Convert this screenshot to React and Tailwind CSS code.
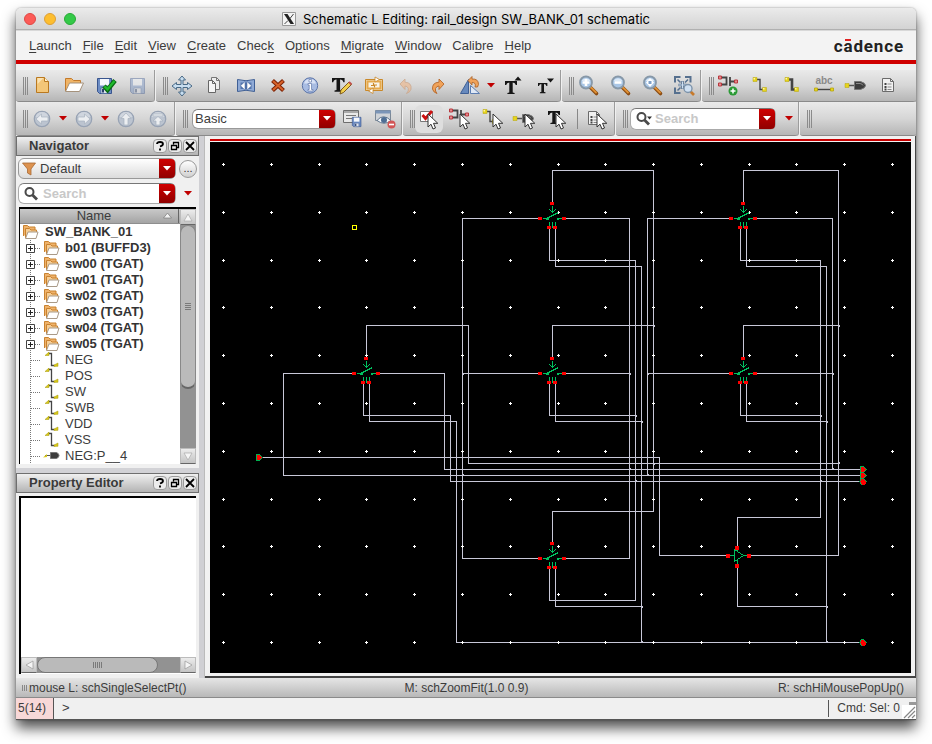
import React from "react";

const FONT = "font-['Liberation_Sans',Arial,sans-serif]";

/* ---------- shared drawings ---------- */

function Icon({ children, w = 30, h = 26 }) {
  return (
    <svg width={w} height={h} viewBox={`0 0 ${w} ${h}`} fill="none" aria-hidden="true" className="block shrink-0">
      {children}
    </svg>
  );
}

const Triangle = () => (
  <svg width="8" height="5" viewBox="0 0 8 5" aria-hidden="true" className="block shrink-0">
    <path d="M0 0h8L4 4.500z" fill="#c00000" />
  </svg>
);

const Floppy = ({ x, y, s = 1, faded }) => (
  <g transform={`translate(${x} ${y}) scale(${s})`} opacity={faded ? 0.4 : 1}>
    <path d="M.5.5h14v15H2.500l-2-2z" fill="#6d8dc4" stroke="#39558e" />
    <path d="M3 1h9v6.500H3z" fill="#f4f7fc" />
    <path d="M4 10h7v5.500H4z" fill="#dfe4ee" stroke="#39558e" strokeWidth=".6" />
    <path d="M5 11h2v3.500H5z" fill="#2b416e" />
  </g>
);

const Cursor = ({ x, y }) => (
  <path
    transform={`translate(${x} ${y})`}
    d="M0 0v13l3-2.800 2 4.800 2.500-1-2-4.700H9.800z"
    fill="#fff"
    stroke="#333"
    strokeWidth="1"
  />
);

const Lens = ({ children }) => (
  <>
    <path d="M17 14l6.500 6.500" stroke="#8a4b12" strokeWidth="3.600" strokeLinecap="round" />
    <path d="M18 14.500l5 5" stroke="#e09033" strokeWidth="1.800" strokeLinecap="round" />
    <circle cx="13" cy="9.500" r="6" fill="#a9c6e6" stroke="#8798a8" strokeWidth="1.800" />
    <path d="M8.500 8a5 5 0 0 1 9 0" fill="#dbe9f7" />
    {children}
  </>
);

const NavCircle = ({ children }) => (
  <>
    <circle cx="15" cy="13" r="7.700" fill="#bcc4d0" stroke="#98a3b4" strokeWidth="1.300" />
    <path d="M8.500 11a6.700 6.700 0 0 1 13 0" fill="#cfd5de" />
    <g fill="#eceef1" stroke="#a8b1be" strokeWidth=".7">{children}</g>
  </>
);

const Transistor = ({ x, y }) => (
  <g transform={`translate(${x} ${y})`}>
    <path d="M3 2.500h5M3 9.500h5M8.500 1.500v9M12 2v9M12 6.500h5" stroke="#444" strokeWidth="1.800" />
    <path d="M.5 1h3v3h-3zM.5 8h3v3h-3zM16.500 5h3v3h-3z" fill="#e58b8e" stroke="#b8383e" />
  </g>
);

const WireGlyph = ({ x, y, wide }) => (
  <g transform={`translate(${x} ${y})`}>
    <path d="M3 2.500h4v10h4" stroke="#444" strokeWidth={wide ? 2.600 : 1.400} />
    <path d="M0 .5h4v4H0zM9.500 10.500h4v4h-4z" fill="#e6d41e" stroke="#b5a50a" strokeWidth=".5" />
    <path d="M.5 1h1.500v1.500H.5zM10 11h1.500v1.500H10z" fill="#fff6a8" />
  </g>
);

const PinGlyph = ({ x, y }) => (
  <g transform={`translate(${x} ${y})`}>
    <path d="M3 4.500h6" stroke="#555" strokeWidth="1.500" />
    <path d="M9.500.5h6q5 1.500 5 4t-5 4h-6z" fill="#3d3d3d" stroke="#777" />
    <path d="M11 2.500h4q3 .6 3 2" stroke="#8a8a8a" />
    <path d="M0 2.500h4v4H0z" fill="#e6d41e" stroke="#b5a50a" strokeWidth=".5" />
  </g>
);

const Sheet = ({ x, y }) => (
  <g transform={`translate(${x} ${y})`}>
    <path d="M.5.5h8l3 3v10H.5z" fill="#f1f1f1" stroke="#6b6b6b" />
    <path d="M8.500.5v3h3" stroke="#6b6b6b" />
    <path d="M2.500 6h2M2.500 9h2M2.500 11.500h2" stroke="#444" strokeWidth="1.800" />
    <path d="M5.500 6h4M5.500 9h4M5.500 11.500h4" stroke="#888" />
  </g>
);

const BoldT = ({ x, y, s = 1 }) => (
  <path
    transform={`translate(${x} ${y}) scale(${s})`}
    d="M0 0h12v4h-1.200Q10.300 1.400 7.700 1.400V11.500L9.600 12v1H2.400v-1l1.900-.5V1.400Q1.700 1.400 1.200 4H0z"
    fill="#151515"
  />
);

const I = {
  newFile: (
    <Icon>
      <path d="M9.500 4.500h8l4 4v11h-12z" fill="#f3c678" stroke="#b97820" />
      <path d="M10.500 11l6-6h-6z" fill="#fbe3b4" />
      <path d="M17.500 4.500v4h4" fill="#fff1cf" stroke="#b97820" />
    </Icon>
  ),
  open: (
    <Icon>
      <path d="M6.500 18V5.500h6l2 2h7v4" fill="#f0b466" stroke="#c47a2a" />
      <path d="M6.500 18.500l4-8.500h14l-4 8.500z" fill="#fff" stroke="#a5927c" />
    </Icon>
  ),
  saveCheck: (
    <Icon>
      <Floppy x={6} y={5} />
      <path d="M13 13l3.500 4L24 7.500" stroke="#0a6a12" strokeWidth="4.500" />
      <path d="M13.500 13.300l3 3L23.500 8" stroke="#1fba2c" strokeWidth="2.400" />
    </Icon>
  ),
  save: (<Icon><Floppy x={7} y={5} faded /></Icon>),
  move: (
    <Icon>
      <path d="M15 3l3.500 4H16v4.500h4.500V9.500L25 13l-4.500 3.500v-2H16V19h2.500L15 23l-3.500-4H14v-4.500H9.500v2L5 13l4.500-3.500v2H14V7h-2.500z" fill="#c8def0" stroke="#4a6a86" />
    </Icon>
  ),
  copy: (
    <Icon>
      <path d="M12.500 4.500h5l3 3v9h-8z" fill="#eee" stroke="#777" />
      <path d="M17.500 4.500v3h3" stroke="#777" />
      <path d="M9.500 7.500h4l3 3v9h-7z" fill="#f5f5f5" stroke="#666" />
      <path d="M13.500 7.500v3h3" stroke="#666" />
    </Icon>
  ),
  stretch: (
    <Icon>
      <path d="M6.500 6.500q8.500 2.500 17 0v12q-8.500-2.500-17 0z" fill="#8faad6" stroke="#3f5f95" />
      <path d="M9.500 9.500h11v6.500h-11z" fill="#5577af" />
      <path d="M14 8.500l-4.500 4.300 4.500 4.300zM16 8.500l4.500 4.300-4.500 4.300z" fill="#fff" stroke="#3f5f95" strokeWidth=".5" />
    </Icon>
  ),
  del: (
    <Icon>
      <path d="M9.500 7.500l11 10M20.500 7.500l-11 10" stroke="#7e2306" strokeWidth="4.200" />
      <path d="M10 8l10 9M20 8l-10 9" stroke="#d9632a" strokeWidth="2" />
    </Icon>
  ),
  info: (
    <Icon>
      <circle cx="15" cy="12.500" r="7.700" fill="#a8bce2" stroke="#5b74a8" />
      <path d="M9 10.500a6.300 6.300 0 0 1 12 0" fill="#d8e2f5" />
      <path d="M14 6.500h2.500V9H14zM13 10.500h3.500v6H18V18h-5v-1.500h1.200V12H13z" fill="#fff" stroke="#50699f" strokeWidth=".6" />
    </Icon>
  ),
  editText: (
    <Icon>
      <BoldT x={5} y={5} s={1.050} />
      <path d="M13 21l1-4 8-8 2.500 2.500-8 8z" fill="#f2cf4d" stroke="#7d5a1c" />
      <path d="M22 9l2.500 2.500" stroke="#c0504d" strokeWidth="2" />
    </Icon>
  ),
  swap: (
    <Icon>
      <path d="M6.500 6.500h17v11h-17z" fill="#eedcb8" stroke="#c98829" />
      <path d="M8.500 8.500h13v7h-13z" fill="#f8f4ea" stroke="#e6a94c" strokeWidth="2" />
      <path d="M16 4v5l4.500-2.500zM14 15v5.500L9.500 18z" fill="#fff" stroke="#c98829" strokeWidth=".8" />
      <path d="M12 12.500h2.500V10M18 12h-2.500v2.500" stroke="#c98829" strokeWidth="1.200" />
    </Icon>
  ),
  undo: (
    <Icon>
      <path d="M9 11l5-5v3.200q7 .3 6 7-1 3.300-4.500 4.300 2.500-2.500 1.800-5Q16.500 13 14 13v3.500z" fill="#e9bd9a" stroke="#c9a080" strokeWidth=".8" opacity=".8" />
    </Icon>
  ),
  redo: (
    <Icon>
      <path d="M21 11l-5-5v3.200q-7 .3-6.500 7 1 3.300 4.500 4.300-2.200-2.500-1.500-5 1-2.500 3.500-2.500v3.500z" fill="#f0a259" stroke="#b5682a" strokeWidth=".9" />
    </Icon>
  ),
  rotate: (
    <Icon>
      <path d="M5.500 20.500h8v-14z" fill="#6789bd" stroke="#3f5f95" />
      <path d="M15.500 20.500v-8l9 8z" fill="#dfe8f5" stroke="#5c7db1" />
      <path d="M13 7.500l4-4V6q6.500-.5 6.500 5.500l-1 2.500h-2.500q1.500-4.500-3-4.500v2.500z" fill="#f0a259" stroke="#a85e25" strokeWidth=".8" />
    </Icon>
  ),
  textUp: (
    <Icon>
      <BoldT x={8} y={8} />
      <path d="M17.500 7.500l3.500-4 3.500 4z" fill="#151515" />
    </Icon>
  ),
  textDown: (
    <Icon>
      <BoldT x={9} y={10} s={0.780} />
      <path d="M18 5.500h7l-3.500 4z" fill="#151515" />
    </Icon>
  ),
  zoomIn: (<Icon><Lens><path d="M9.500 9.500h7M13 6v7" stroke="#fff" strokeWidth="2.600" /></Lens></Icon>),
  zoomOut: (<Icon><Lens><path d="M9.500 9.500h7" stroke="#fff" strokeWidth="2.600" /></Lens></Icon>),
  zoomFit: (<Icon><Lens><path d="M13 5l4 4.500-4 4.500-4-4.500z" fill="#fff" /><path d="M11.500 8h3v3h-3z" fill="#7fa0c8" /></Lens></Icon>),
  zoomSel: (
    <Icon>
      <path d="M6 9.500V4h5.500M16 4h5.500v5.500M6 14.500V20h5.500" stroke="#56708f" strokeWidth="2" />
      <path d="M8.500 6.500l3 3M19 6.500l-3 3M8.500 17.500l3-3" stroke="#56708f" strokeWidth="1.500" />
      <path d="M13.500 8v8M9.500 12h8" stroke="#56708f" strokeWidth="2.600" />
      <path d="M13.500 8.500v7M10 12h7" stroke="#cfe0f2" />
      <path d="M21 18l4 4" stroke="#c77a2b" strokeWidth="2.600" />
      <circle cx="19" cy="15.500" r="4" fill="#cfe0f2" stroke="#7d93aa" strokeWidth="1.400" />
    </Icon>
  ),
  addInstance: (
    <Icon>
      <Transistor x={5} y={2} />
      <circle cx="20" cy="18" r="4.500" fill="#2b9a35" />
      <path d="M17.500 18h5M20 15.500v5" stroke="#fff" strokeWidth="1.500" />
    </Icon>
  ),
  wire: (<Icon><WireGlyph x={8} y={4} /></Icon>),
  wideWire: (<Icon><WireGlyph x={8} y={4} wide /></Icon>),
  label: (
    <Icon>
      <text x="15" y="11" textAnchor="middle" fontSize="10" fontWeight="700" fill="#8a8a8a" fontFamily="Liberation Sans">abc</text>
      <path d="M8 16.500h14" stroke="#444" strokeWidth="1.400" />
      <path d="M5.500 15h3v3h-3zM21.500 15h3v3h-3z" fill="#e6d41e" stroke="#b5a50a" strokeWidth=".8" />
    </Icon>
  ),
  pin: (<Icon><PinGlyph x={4} y={8} /></Icon>),
  props: (<Icon><Sheet x={9} y={5} /></Icon>),
  back: (<Icon><NavCircle><path d="M9 13l5.500-5v3H21v4h-6.500v3z" /></NavCircle></Icon>),
  forward: (<Icon><NavCircle><path d="M21 13l-5.500-5v3H9v4h6.500v3z" /></NavCircle></Icon>),
  up: (<Icon><NavCircle><path d="M15 7l5 5.500h-3V19h-4v-6.500h-3z" /></NavCircle></Icon>),
  top: (<Icon><NavCircle><path d="M10 8h10v2H10zM15 10.500l5 4.500h-3v4h-4v-4h-3z" /></NavCircle></Icon>),
  saveView: (
    <Icon>
      <path d="M5.500 4.500h15v12h-15z" fill="#e9e9e9" stroke="#6d6d6d" />
      <path d="M6 5h14v2H6z" fill="#a9a9a9" />
      <path d="M8 9.500h10M8 12.500h6" stroke="#777" strokeWidth="1.200" />
      <Floppy x={14} y={11} s={0.620} />
    </Icon>
  ),
  hideView: (
    <Icon>
      <path d="M5.500 4.500h15v10h-15z" fill="#cfd3d8" stroke="#7b8896" />
      <path d="M5.500 4.500h15v3h-15z" fill="#7b95b8" />
      <path d="M7 14.500q6-7.500 14 0-7 5.500-14 0z" fill="#f4f7fa" stroke="#60748c" />
      <circle cx="14" cy="14" r="3" fill="#4e6e94" />
      <circle cx="21.500" cy="18.500" r="4" fill="#d25656" />
      <path d="M19 18.500h5" stroke="#fff" strokeWidth="1.600" />
    </Icon>
  ),
  selAll: (
    <Icon>
      <path d="M6.500 5.500h12v10h-12z" fill="#fff" stroke="#777" />
      <path d="M8.500 9l3 3.500 6.500-7.500" stroke="#cc1111" strokeWidth="2.800" />
      <Cursor x={14} y={8} />
    </Icon>
  ),
  selInst: (<Icon><Transistor x={3} y={2} /><Cursor x={14} y={8} /></Icon>),
  selWire: (<Icon><WireGlyph x={5} y={3} /><Cursor x={15} y={8} /></Icon>),
  selPin: (<Icon><PinGlyph x={3} y={8} /><Cursor x={15} y={8} /></Icon>),
  selText: (<Icon><BoldT x={6} y={5} /><Cursor x={14} y={8} /></Icon>),
  selFilter: (<Icon><Sheet x={5} y={5} /><Cursor x={14} y={8} /></Icon>),
};

const SearchGlyph = ({ small }) => (
  <svg width="18" height="16" viewBox="0 0 18 16" fill="none" aria-hidden="true" className="block shrink-0">
    <circle cx="6.500" cy="6" r="4" stroke="#4a4a4a" strokeWidth="2" />
    <path d="M9.500 9l4.500 4.500" stroke="#4a4a4a" strokeWidth="2.800" />
    {small && <path d="M12 5.500h5l-2.500 3z" fill="#333" />}
  </svg>
);

/* ---------- toolbar parts ---------- */

function Group({ children, grow, label }) {
  return (
    <div
      role="toolbar"
      aria-label={label}
      className={
        "flex items-center rounded-b-[3px] border-b border-[#8a8a8a] bg-linear-to-b from-[#eaeaea] via-[#d6d6d6] to-[#b6b6b6] shadow-[1px_0_0_#9c9c9c] " +
        (grow ? "flex-1" : "")
      }
    >
      <span className="ml-[7px] -mr-0.5 flex h-[18px] w-[5px] shrink-0 justify-between">
        <span className="w-px bg-[#8b8b8b]" />
        <span className="w-px bg-[#8b8b8b]" />
        <span className="w-px bg-[#8b8b8b]" />
      </span>
      {children}
    </div>
  );
}

const Tool = ({ icon, name, active }) => (
  <button
    type="button"
    aria-label={name}
    className={
      "flex h-7 shrink-0 items-center justify-center " +
      (active ? "mx-0.5 w-7 rounded-md bg-[#dedede]" : "w-8")
    }
  >
    {I[icon]}
  </button>
);

const Drop = ({ name }) => (
  <button type="button" aria-label={name} className="flex h-5 w-2.5 shrink-0 items-center justify-center">
    <Triangle />
  </button>
);

const RedArrow = () => (
  <span className="pointer-events-none flex w-4 shrink-0 items-center justify-center self-stretch rounded-r bg-linear-to-b from-[#d00000] to-[#900000]">
    <svg width="8" height="5" viewBox="0 0 8 5" aria-hidden="true">
      <path d="M0 0h8L4 4.500z" fill="#fff" />
    </svg>
  </span>
);

const MENUS = [
  ["", "L", "aunch"], ["", "F", "ile"], ["", "E", "dit"], ["", "V", "iew"], ["", "C", "reate"], ["Chec", "k", ""],
  ["O", "p", "tions"], ["", "M", "igrate"], ["", "W", "indow"], ["Cali", "b", "re"], ["", "H", "elp"],
];

/* ---------- side panels ---------- */

const PanelHeader = ({ title }) => (
  <div className="flex h-5 items-center border border-[#6f6f6f] bg-linear-to-b from-[#f0f0f0] to-[#b4b4b4] pl-3">
    <h2 className="flex-1 text-[13px] leading-4 font-bold text-[#3a3a3a]">{title}</h2>
    {["Help", "Float", "Close"].map((n) => (
      <button key={n} type="button" aria-label={n} className="mr-px flex h-3.5 w-3.5 items-center justify-center rounded border border-[#9a9a9a] bg-[#ececec]">
        <svg width="10" height="10" viewBox="0 0 10 10" fill="none" stroke="#000" aria-hidden="true">
          {n === "Help" && <path d="M2 3q0-2 3-2t3 2q0 1.500-3 2.500M5 7.500v2" strokeWidth="1.800" />}
          {n === "Float" && <path d="M3.500 3.500v-2h5v5h-2M1.500 4.500h5v4h-5zM3.500 1.500h5M1.500 4.500h5" strokeWidth="1.300" />}
          {n === "Close" && <path d="M1 1l8 8M9 1L1 9" strokeWidth="1.800" />}
        </svg>
      </button>
    ))}
  </div>
);

const Folder = () => (
  <svg width="17" height="16" viewBox="0 0 17 16" fill="none" aria-hidden="true" className="block shrink-0">
    <path d="M1.500 12V1.500h4l1.500 1.500h6v3" fill="#efb26a" stroke="#c9822f" />
    <path d="M3.500 14V4.500h4L9 6h5.500v3" fill="#f6cd94" stroke="#c9822f" />
    <path d="M3.500 14.500l2.500-6.500h10l-2 6.500z" fill="#fff" stroke="#a99a88" />
  </svg>
);

const NetIcon = () => (
  <svg width="17" height="16" viewBox="0 0 17 16" fill="none" aria-hidden="true" className="block shrink-0">
    <path d="M5 1.500h3.500v12h3" stroke="#444" strokeWidth="1.300" />
    <path d="M2 3.500L6 0v3.500zM11 14.500l4-.2V11l-4 2z" fill="#d8c81a" stroke="#a69808" strokeWidth=".5" />
  </svg>
);

const PinIcon = () => (
  <svg width="17" height="16" viewBox="0 0 17 16" fill="none" aria-hidden="true" className="block shrink-0">
    <path d="M2 7.500h6" stroke="#555" />
    <path d="M0 9.500L4 6v3z" fill="#d8c81a" />
    <path d="M7.500 4.500h6q2.500 1 2.500 3t-2.500 3h-6z" fill="#3d3d3d" stroke="#777" />
  </svg>
);

const TREE = [
  ["b01 (BUFFD3)", "folder"], ["sw00 (TGAT)", "folder"], ["sw01 (TGAT)", "folder"], ["sw02 (TGAT)", "folder"],
  ["sw03 (TGAT)", "folder"], ["sw04 (TGAT)", "folder"], ["sw05 (TGAT)", "folder"],
  ["NEG", "net"], ["POS", "net"], ["SW", "net"], ["SWB", "net"], ["VDD", "net"], ["VSS", "net"], ["NEG:P__4", "pin"],
];

const Branch = ({ folder }) => (
  <svg width="23" height="16" viewBox="0 0 23 16" fill="none" aria-hidden="true" className="block shrink-0">
    <path d="M10.500 0v16M11 8.500h9" stroke="#777" strokeDasharray="1 1" />
    {folder && (
      <>
        <path d="M6.500 4.500h8v8h-8z" fill="#fff" stroke="#444" />
        <path d="M8 8.500h5M10.500 6v5" stroke="#222" />
      </>
    )}
  </svg>
);

const scrollBtn =
  "flex h-4 w-4 shrink-0 items-center justify-center border border-[#bcbcbc] border-b-[#666] bg-linear-to-b from-[#ececec] to-[#c4c4c4]";

function Sidebar() {
  return (
    <aside className="flex w-[183px] shrink-0 flex-col bg-[#f0f0f0]">
      <section aria-label="Navigator" className="flex flex-1 flex-col pb-1">
        <PanelHeader title="Navigator" />
        <div className="flex items-center gap-[3px] pt-0.5 pl-0.5">
          <label className="flex h-[21px] w-[158px] items-center rounded-md border border-[#999] bg-linear-to-b from-white to-[#dcdcdc]">
            <svg width="14" height="14" viewBox="0 0 14 14" aria-hidden="true" className="ml-[3px] shrink-0">
              <path d="M.5 1h13L9 7v6l-3.500-2V7z" fill="#dd9350" stroke="#a86a35" strokeWidth=".8" />
            </svg>
            <select aria-label="View filter" className="min-w-0 flex-1 appearance-none bg-transparent pl-1 text-[13px] leading-4 text-[#3c3c3c]">
              <option>Default</option>
            </select>
            <RedArrow />
          </label>
          <button type="button" aria-label="More" className="flex h-[18px] w-[18px] items-end justify-center rounded-full border border-[#999] bg-linear-to-b from-white to-[#d0d0d0] pb-1 text-[11px] leading-[10px] text-[#333]">
            ...
          </button>
        </div>
        <div className="flex items-center gap-1 pt-1 pl-0.5">
          <label className="flex h-[21px] w-[158px] items-center rounded-md border border-[#aaa] border-t-[#777] bg-white pl-1">
            <SearchGlyph />
            <input type="text" aria-label="Search navigator" placeholder="Search" className="min-w-0 flex-1 bg-transparent pl-0.5 text-[13px] leading-4 font-bold placeholder:text-[#c8c8c8]" />
            <RedArrow />
          </label>
          <span className="flex w-4 justify-center"><Drop name="Search options" /></span>
        </div>
        <div className="mx-[3px] mt-[3px] flex flex-1 border-t-2 border-l border-black bg-white">
          <div className="min-w-0 flex-1">
            <div className="flex h-[15px] items-center border-b border-[#8e8e8e] bg-linear-to-b from-[#c9c9c9] to-[#a4a4a4] text-[13px] leading-[14px] text-[#3c3c3c]">
              <span className="flex-1 pl-2 text-center">Name</span>
              <svg width="20" height="14" viewBox="0 0 20 14" aria-hidden="true">
                <path d="M3.500 9l4-5 4 5z" fill="#f3f3f3" stroke="#777" strokeWidth=".7" />
                <path d="M18.500 0v14" stroke="#666" />
              </svg>
            </div>
            <div className="text-[13px] leading-4 text-[#3c3c3c]">
              <div className="flex items-center gap-1.5 pl-0.5 font-bold text-[#333]">
                <Folder />SW_BANK_01
              </div>
              <ul>
                {TREE.map(([name, kind]) => (
                  <li key={name} className={"flex h-4 items-center " + (kind === "folder" ? "font-bold text-[#333]" : "")}>
                    <Branch folder={kind === "folder"} />
                    {kind === "folder" ? <Folder /> : kind === "net" ? <NetIcon /> : <PinIcon />}
                    <span className="pl-[5px] whitespace-nowrap">{name}</span>
                  </li>
                ))}
              </ul>
            </div>
          </div>
          <div className="flex w-4 flex-col bg-[#929292]">
            <button type="button" aria-label="Scroll up" className={scrollBtn}>
              <svg width="10" height="9" viewBox="0 0 10 9" aria-hidden="true"><path d="M1 8l4-7 4 7z" fill="#f5f5f5" stroke="#aaa" strokeWidth=".7" /></svg>
            </button>
            <div className="flex h-[164px] flex-col items-center justify-center gap-px rounded-lg border border-[#888] border-b-2 border-b-[#666] bg-[#bababa]">
              {[0, 1, 2, 3].map((i) => <span key={i} className="h-px w-[6px] bg-[#7a7a7a]" />)}
            </div>
            <span className="flex-1" />
            <button type="button" aria-label="Scroll down" className={scrollBtn}>
              <svg width="10" height="9" viewBox="0 0 10 9" aria-hidden="true"><path d="M1 1h8L5 8z" fill="#f5f5f5" stroke="#aaa" strokeWidth=".7" /></svg>
            </button>
          </div>
        </div>
      </section>
      <div className="h-[5px] bg-[#d2d2d6]" />
      <section aria-label="Property Editor" className="flex h-[205px] flex-col">
        <PanelHeader title="Property Editor" />
        <div className="mx-[3px] mt-[3px] mb-1 flex flex-1 flex-col justify-end border-t-2 border-l-2 border-black bg-white pb-px">
          <div className="flex h-4 bg-[#929292]">
            <button type="button" aria-label="Scroll left" className={scrollBtn}>
              <svg width="9" height="10" viewBox="0 0 9 10" aria-hidden="true"><path d="M8 1v8L1 5z" fill="#f5f5f5" stroke="#999" strokeWidth=".7" /></svg>
            </button>
            <div className="flex w-[121px] items-center justify-center gap-px rounded-lg border border-[#777] bg-[#bababa]">
              {[0, 1, 2, 3, 4].map((i) => <span key={i} className="h-1.5 w-px bg-[#7a7a7a]" />)}
            </div>
            <span className="flex-1" />
            <button type="button" aria-label="Scroll right" className={scrollBtn}>
              <svg width="9" height="10" viewBox="0 0 9 10" aria-hidden="true"><path d="M1 1v8l7-4z" fill="#f5f5f5" stroke="#999" strokeWidth=".7" /></svg>
            </button>
          </div>
        </div>
      </section>
    </aside>
  );
}

/* ---------- schematic ---------- */

const GRID_X = [223, 271, 319, 366, 414, 462, 510, 558, 605, 653, 701, 749, 796, 844, 892];
const GRID_Y = [164, 212, 260, 307, 355, 403, 451, 499, 546, 594, 642];

const WIRES = [
  "M552 204V170H653V511H552V544", "M552 359V325H653",
  "M540 218H462V558H540", "M540 373H462", "M564 218H629V558H564", "M564 373H629",
  "M549 228V260H635V600H549V568", "M549 383V415H635",
  "M555 228V266H641V642", "M555 383V421H641", "M555 568V606H641",
  "M366 359V325H468V463H838", "M354 373H283V475H860", "M378 373H444V469H860",
  "M363 383V415H450V481H860", "M369 383V421H456V642H860", "M260 457H659V555H728",
  "M743 204V170H838V555H749", "M743 359V325H838",
  "M731 218H647V475", "M731 373H647", "M755 218H832V469", "M755 373H832",
  "M740 228V260H820V517H737V546", "M740 383V415H820",
  "M746 228V266H826V642", "M746 383V421H826", "M737 564V606H826",
];

const JOINTS = [
  [653, 325], [653, 463], [462, 373], [462, 474], [629, 373], [629, 468], [635, 415], [635, 480], [641, 421],
  [641, 606], [641, 641], [838, 325], [838, 462], [647, 373], [647, 474], [832, 373], [832, 468], [820, 415],
  [820, 480], [826, 421], [826, 606], [826, 641],
];

const SWITCHES = [[552, 218], [743, 218], [366, 373], [552, 373], [743, 373], [552, 558]];

const Port = ({ x, y, round }) => (
  <g transform={`translate(${x} ${y})`}>
    <path d={round ? "M-3 0L-1 -3H1L4 0L1 3H-1Z" : "M-2 -3H1L4 0L1 3H-2Z"} fill="#ff0000" stroke="#00b050" />
    {round && <path d="M-1 -2h3v5h-3zM-2 -1h5v3h-5z" fill="#ff0000" />}
  </g>
);

function Schematic() {
  return (
    <svg className="block h-[531px] w-full bg-black" role="img" aria-label="SW_BANK_01 schematic" fill="none" shapeRendering="crispEdges">
      <g transform="translate(-209.5 -141.5)">
        <g stroke="#c8c8d8">{WIRES.map((d) => <path key={d} d={d} />)}</g>
        <g fill="#c8c8d8">{JOINTS.map(([x, y]) => <rect key={`${x}-${y}`} x={x - 0.5} y={y - 0.5} width="2" height="2" />)}</g>
        <g stroke="#ffffff">
          {GRID_X.flatMap((x) => GRID_Y.map((y) => <path key={`${x}-${y}`} d={`M${x - 1.5} ${y}h3M${x} ${y - 1.5}v3`} />))}
        </g>
        {SWITCHES.map(([x, y]) => (
          <g key={`${x}-${y}`} transform={`translate(${x} ${y})`}>
            <path d="M0 -13V-6M-3 -9L0 -6L3 -9M-10 0H-4M-6 0L6 -6M5 0H10M-3 3V9M0 3V9M3 3V9" stroke="#00c060" />
            <path d="M-7 -1h3v2h-3zM4 -1h2v2h-2z" fill="#00c060" />
            <path d="M-2.500 -16.500h4v3h-4zM-14.500 -1.500h4v3h-4zM9.500 -1.500h4v3h-4zM-5.500 7.500h4v3h-4zM.5 7.500h4v3h-4z" fill="#ff0000" />
          </g>
        ))}
        <g transform="translate(737 555)">
          <path d="M-8 0H-3M-3 -6V6M-3 -6L6 0L-3 6M6 0H10M0 -7V-4M0 4V8" stroke="#00c060" />
          <path d="M-2.500 -9.500h4v4h-4zM-2.500 8.500h4v4h-4zM-11.500 -1.500h4v4h-4zM9.500 -1.500h4v4h-4z" fill="#ff0000" />
        </g>
        <Port x={258} y={457} />
        <Port x={862} y={469} />
        <Port x={862} y={475} />
        <Port x={862} y={481} round />
        <Port x={862} y={642} round />
        <rect x="352" y="225" width="4" height="4" stroke="#ffff00" />
      </g>
    </svg>
  );
}

/* ---------- window ---------- */

export default function App() {
  return (
    <div className={"flex min-h-screen flex-col bg-white px-4 pt-2 pb-6 text-[#3c3c3c] " + FONT}>
      <div className="flex flex-1 flex-col rounded-t-[5px] bg-[#f0f0f0] shadow-[0_8px_14px_rgba(0,0,0,0.7),0_0_2px_rgba(0,0,0,0.4)]">
        <header className="flex h-[22px] items-center rounded-t-[5px] border-b border-[#b0b0b0] bg-linear-to-b from-[#ebebeb] to-[#d3d3d3] px-2">
          <div className="flex flex-1 gap-2">
            <button type="button" aria-label="Close" className="h-3 w-3 rounded-full border border-[#df4744] bg-[#fc5b57]" />
            <button type="button" aria-label="Minimize" className="h-3 w-3 rounded-full border border-[#de9f34] bg-[#fdbe2f]" />
            <button type="button" aria-label="Zoom" className="h-3 w-3 rounded-full border border-[#27aa35] bg-[#34c948]" />
          </div>
          <div className="flex items-center gap-[7px]">
            <svg width="14" height="14" viewBox="0 0 14 14" aria-hidden="true">
              <path d="M.5.5h13v13H.5z" fill="#f4f4f4" stroke="#999" />
              <path d="M2 2h3.500l6.500 10H8.500z" fill="#222" />
              <path d="M11.500 2L8 6.500M6 8.500L2.500 12" stroke="#444" strokeWidth="1" />
            </svg>
            <h1 className="font-['Inter',sans-serif] text-[13px] leading-4 whitespace-nowrap text-black">
              Schematic L Editing: rail_design SW_BANK_01 schematic
            </h1>
          </div>
          <div className="flex-1" />
        </header>

        <div className="flex h-[30px] items-center border-t border-[#d8d8d8] bg-[#f3f3f3] pr-3 pl-[13px]">
          <nav aria-label="Main menu" className="flex flex-1 gap-[11px] text-[13px] leading-4">
            {MENUS.map(([a, b, c]) => (
              <button key={a + b + c} type="button">
                {a}<span className="underline underline-offset-2">{b}</span>{c}
              </button>
            ))}
          </nav>
          <div className="font-['Roboto',sans-serif] text-[17px] leading-5 font-bold tracking-wider text-[#222]">
            c
            <span className="relative">
              a
              <span className="absolute top-[3px] left-0.5 h-0.5 w-1.5 bg-[#e02020]" />
            </span>
            dence
          </div>
        </div>
        <div className="h-1 bg-[#d00000]" />

        <div className="mt-1.5 flex h-8 gap-0.5 overflow-hidden">
          <Group label="File">
            <Tool icon="newFile" name="New" />
            <Tool icon="open" name="Open" />
            <Tool icon="saveCheck" name="Check and Save" />
            <Tool icon="save" name="Save" />
          </Group>
          <Group label="Edit">
            <Tool icon="move" name="Move" />
            <Tool icon="copy" name="Copy" />
            <Tool icon="stretch" name="Stretch" />
            <Tool icon="del" name="Delete" />
            <Tool icon="info" name="Properties" />
            <Tool icon="editText" name="Edit Text" />
            <Tool icon="swap" name="Swap" />
            <Tool icon="undo" name="Undo" />
            <Tool icon="redo" name="Redo" />
            <Tool icon="rotate" name="Rotate" />
            <Drop name="Rotate options" />
            <Tool icon="textUp" name="Larger Text" />
            <Tool icon="textDown" name="Smaller Text" />
          </Group>
          <Group label="Zoom">
            <Tool icon="zoomIn" name="Zoom In" />
            <Tool icon="zoomOut" name="Zoom Out" />
            <Tool icon="zoomFit" name="Zoom Fit" />
            <Tool icon="zoomSel" name="Zoom Selected" />
          </Group>
          <Group label="Create" grow>
            <Tool icon="addInstance" name="Instance" />
            <Tool icon="wire" name="Wire" />
            <Tool icon="wideWire" name="Wide Wire" />
            <Tool icon="label" name="Label" />
            <Tool icon="pin" name="Pin" />
            <Tool icon="props" name="Sheet" />
          </Group>
        </div>

        <div className="flex h-[34px] gap-0.5 overflow-hidden">
          <Group label="Go">
            <Tool icon="back" name="Back" />
            <Drop name="Back history" />
            <Tool icon="forward" name="Forward" />
            <Drop name="Forward history" />
            <Tool icon="up" name="Up" />
            <Tool icon="top" name="Top" />
          </Group>
          <Group label="Workspace">
            <label className="mr-px ml-1.5 flex h-5 w-[144px] items-center rounded-md border border-[#999] border-t-[#777] bg-white">
              <select aria-label="Workspace" className="min-w-0 flex-1 appearance-none bg-transparent pl-0.5 text-[13px] leading-4 text-[#3c3c3c]">
                <option>Basic</option>
              </select>
              <RedArrow />
            </label>
            <Tool icon="saveView" name="Save Workspace" />
            <Tool icon="hideView" name="Delete Workspace" />
          </Group>
          <Group label="Selection">
            <Tool icon="selAll" name="Select All" active />
            <Tool icon="selInst" name="Select Instances" />
            <Tool icon="selWire" name="Select Wires" />
            <Tool icon="selPin" name="Select Pins" />
            <Tool icon="selText" name="Select Labels" />
            <span className="mx-1 h-5 w-px bg-[#888]" />
            <Tool icon="selFilter" name="Selection Filter" />
          </Group>
          <Group label="Search">
            <label className="mr-2 ml-1 flex h-[22px] w-[146px] items-center rounded-md border border-[#aaa] border-t-[#777] bg-white pl-1">
              <SearchGlyph small />
              <input type="text" aria-label="Search" placeholder="Search" className="min-w-0 flex-1 bg-transparent pl-0.5 text-[13px] leading-4 font-bold placeholder:text-[#c8c8c8]" />
              <RedArrow />
            </label>
            <Drop name="Search scope" />
            <span className="w-1" />
          </Group>
          <Group label="More" grow />
        </div>

        <main className="flex flex-1">
          <Sidebar />
          <div className="w-1.5 shrink-0 border-r border-[#bbb] bg-[#d0d0d4]" />
          <div className="min-w-0 flex-1 border-r border-b-2 border-[#444] bg-[#f2f2f2] pt-[3px] pr-1 pb-[3px] pl-[5px]">
            <div className="border-t-2 border-[#c80000] pt-px">
              <Schematic />
            </div>
          </div>
        </main>

        <div className="flex h-5 items-center border-b border-[#8a8a8a] bg-linear-to-b from-[#e6e6e6] to-[#b8b8b8] pr-3 pl-1.5 text-[12px] leading-4">
          <span className="mr-0.5 flex h-1.5 w-[5px] justify-between">
            <span className="w-px bg-[#888]" />
            <span className="w-px bg-[#888]" />
            <span className="w-px bg-[#888]" />
          </span>
          <span className="flex-1">mouse L: schSingleSelectPt()</span>
          <span>M: schZoomFit(1.0 0.9)</span>
          <span className="flex-1 text-right">R: schHiMousePopUp()</span>
        </div>

        <footer className="flex h-[22px] items-stretch border-b border-[#555] text-[13px] leading-5">
          <span className="w-[38px] border-r border-[#555] bg-[#f8d8d8] pl-0.5 text-[12px]">5(14)</span>
          <label className="flex flex-1 pl-2">
            <span>&gt;</span>
            <input type="text" aria-label="Command" className="min-w-0 flex-1 bg-transparent pl-2 outline-none" />
          </label>
          <span className="my-0.5 border-l border-[#555] pl-2 text-[12px] leading-4">Cmd: Sel: 0</span>
          <svg width="16" height="21" viewBox="0 0 16 21" fill="none" aria-hidden="true">
            <path d="M9 4h7v4H9z" fill="#999" />
            <path d="M2 7h14v14H2z" fill="#fff" />
            <path d="M4 20L15 9M8 20l7-7M12 20l3-3" stroke="#888" strokeWidth="1.200" />
          </svg>
        </footer>
      </div>
    </div>
  );
}
